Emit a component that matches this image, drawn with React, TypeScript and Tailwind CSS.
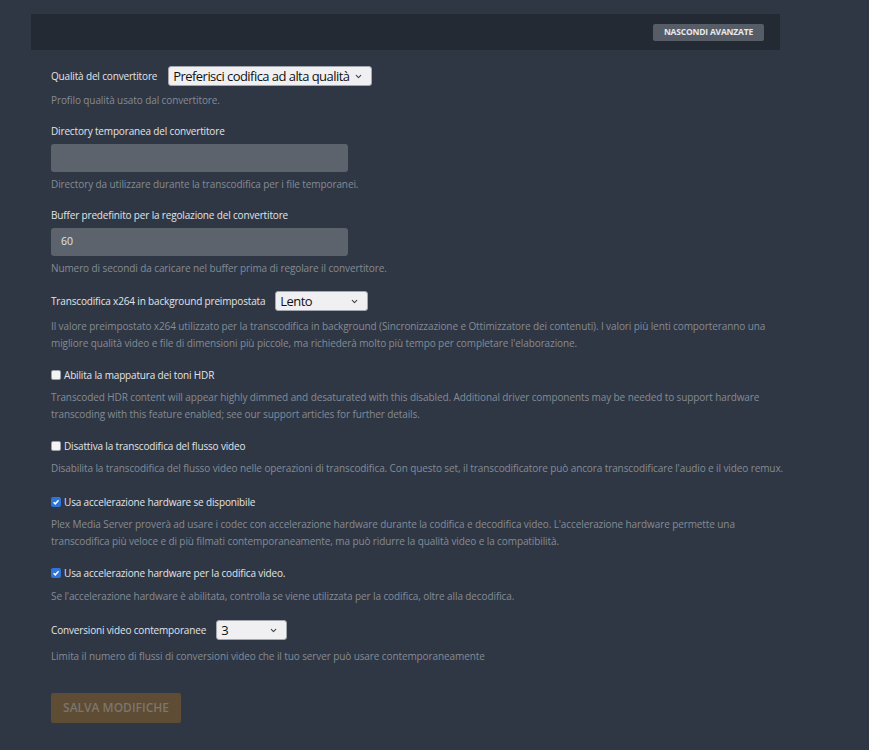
import { ChevronDown } from 'lucide-react';

const font = { fontFamily: '"Open Sans", "Liberation Sans", sans-serif' };

const Help = ({ children, className = 'mt-[6px]' }: { children: React.ReactNode; className?: string }) => (
  <p className={`text-[10px] leading-[17px] text-[#858b94] tracking-[-0.1px] ${className}`}>{children}</p>
);

const Label = ({ children }: { children: React.ReactNode }) => (
  <span className="whitespace-nowrap text-[10px] leading-[16px] text-[#e2e4e7] tracking-[-0.16px]">{children}</span>
);

const Select = ({ value, width }: { value: string; width: string }) => (
  <div
    className={`flex h-[20px] items-center justify-between rounded-[3px] border border-[#a3a8ae] bg-[#f0f0f2] pl-[4px] pr-[8px] text-[13px] leading-none text-[#111] ${width}`}
  >
    <span className="whitespace-nowrap tracking-[-0.55px]">{value}</span>
    <ChevronDown size={9} strokeWidth={3} className="shrink-0 text-[#444]" />
  </div>
);

const Checkbox = ({ checked }: { checked?: boolean }) =>
  checked ? (
    <span className="flex h-[10px] w-[10px] items-center justify-center rounded-[2px] bg-[#2f74d8]">
      <svg width="8" height="8" viewBox="0 0 10 10">
        <path d="M2 5.2 4.1 7.3 8.2 2.8" fill="none" stroke="#fff" strokeWidth="1.8" />
      </svg>
    </span>
  ) : (
    <span className="h-[10px] w-[10px] rounded-[2px] border border-[#9aa0a8] bg-[#f4f4f4]" />
  );

const CheckRow = ({ label, checked }: { label: string; checked?: boolean }) => (
  <div className="flex items-center gap-[3px]">
    <Checkbox checked={checked} />
    <Label>{label}</Label>
  </div>
);

export default function App() {
  return (
    <div className="min-h-[750px] w-full bg-[#2f3744]" style={font}>
      <div className="w-[749px] pl-[31px] pt-[14px] box-content">
        <div className="flex h-[36px] items-center justify-end bg-[#232a33] pr-[16px]">
          <button className="h-[17px] rounded-[2px] bg-[#565d67] px-[11px] text-[8.5px] font-bold leading-none text-[#e8e9eb] tracking-[-0.2px]">
            NASCONDI AVANZATE
          </button>
        </div>

        <div className="ml-[20px] w-[735px]">
          <div className="mt-[16px]">
            <div className="flex items-center gap-[11px]">
              <Label>Qualità del convertitore</Label>
              <Select value="Preferisci codifica ad alta qualità" width="w-[204px]" />
            </div>
            <Help>Profilo qualità usato dal convertitore.</Help>
          </div>

          <div className="mt-[14px]">
            <div className="flex">
              <Label>Directory temporanea del convertitore</Label>
            </div>
            <div className="mt-[5px] h-[28px] w-[297px] rounded-[3px] bg-[#5c636d]" />
            <Help className="mt-[4px]">Directory da utilizzare durante la transcodifica per i file temporanei.</Help>
          </div>

          <div className="mt-[14px]">
            <div className="flex">
              <Label>Buffer predefinito per la regolazione del convertitore</Label>
            </div>
            <div className="mt-[5px] flex h-[28px] w-[297px] items-center rounded-[3px] bg-[#5c636d] pl-[10px] text-[10.5px] text-[#e2e4e7]">
              60
            </div>
            <Help className="mt-[4px]">Numero di secondi da caricare nel buffer prima di regolare il convertitore.</Help>
          </div>

          <div className="mt-[14px]">
            <div className="flex items-center gap-[10px]">
              <Label>Transcodifica x264 in background preimpostata</Label>
              <Select value="Lento" width="w-[93px]" />
            </div>
            <Help className="mt-[7px]">
              Il valore preimpostato x264 utilizzato per la transcodifica in background (Sincronizzazione e Ottimizzatore dei
              contenuti). I valori più lenti comporteranno una migliore qualità video e file di dimensioni più piccole, ma
              richiederà molto più tempo per completare l'elaborazione.
            </Help>
          </div>

          <div className="mt-[15px]">
            <CheckRow label="Abilita la mappatura dei toni HDR" />
            <Help>
              Transcoded HDR content will appear highly dimmed and desaturated with this disabled. Additional driver
              components may be needed to support hardware transcoding with this feature enabled; see our support articles
              for further details.
            </Help>
          </div>

          <div className="mt-[15px]">
            <CheckRow label="Disattiva la transcodifica del flusso video" />
            <Help>
              Disabilita la transcodifica del flusso video nelle operazioni di transcodifica. Con questo set, il
              transcodificatore può ancora transcodificare l'audio e il video remux.
            </Help>
          </div>

          <div className="mt-[17px]">
            <CheckRow label="Usa accelerazione hardware se disponibile" checked />
            <Help>
              Plex Media Server proverà ad usare i codec con accelerazione hardware durante la codifica e decodifica video.
              L'accelerazione hardware permette una transcodifica più veloce e di più filmati contemporaneamente, ma può
              ridurre la qualità video e la compatibilità.
            </Help>
          </div>

          <div className="mt-[15px]">
            <CheckRow label="Usa accelerazione hardware per la codifica video." checked />
            <Help className="mt-[7px]">
              Se l'accelerazione hardware è abilitata, controlla se viene utilizzata per la codifica, oltre alla decodifica.
            </Help>
          </div>

          <div className="mt-[15px]">
            <div className="flex items-center gap-[10px]">
              <Label>Conversioni video contemporanee</Label>
              <Select value="3" width="w-[71px]" />
            </div>
            <Help className="mt-[8px]">
              Limita il numero di flussi di conversioni video che il tuo server può usare contemporaneamente
            </Help>
          </div>

          <button className="mt-[28px] h-[30px] w-[130px] rounded-[2px] bg-[#5e4c35] text-[12px] font-semibold text-[#7c766b]">
            SALVA MODIFICHE
          </button>
        </div>
      </div>
    </div>
  );
}
